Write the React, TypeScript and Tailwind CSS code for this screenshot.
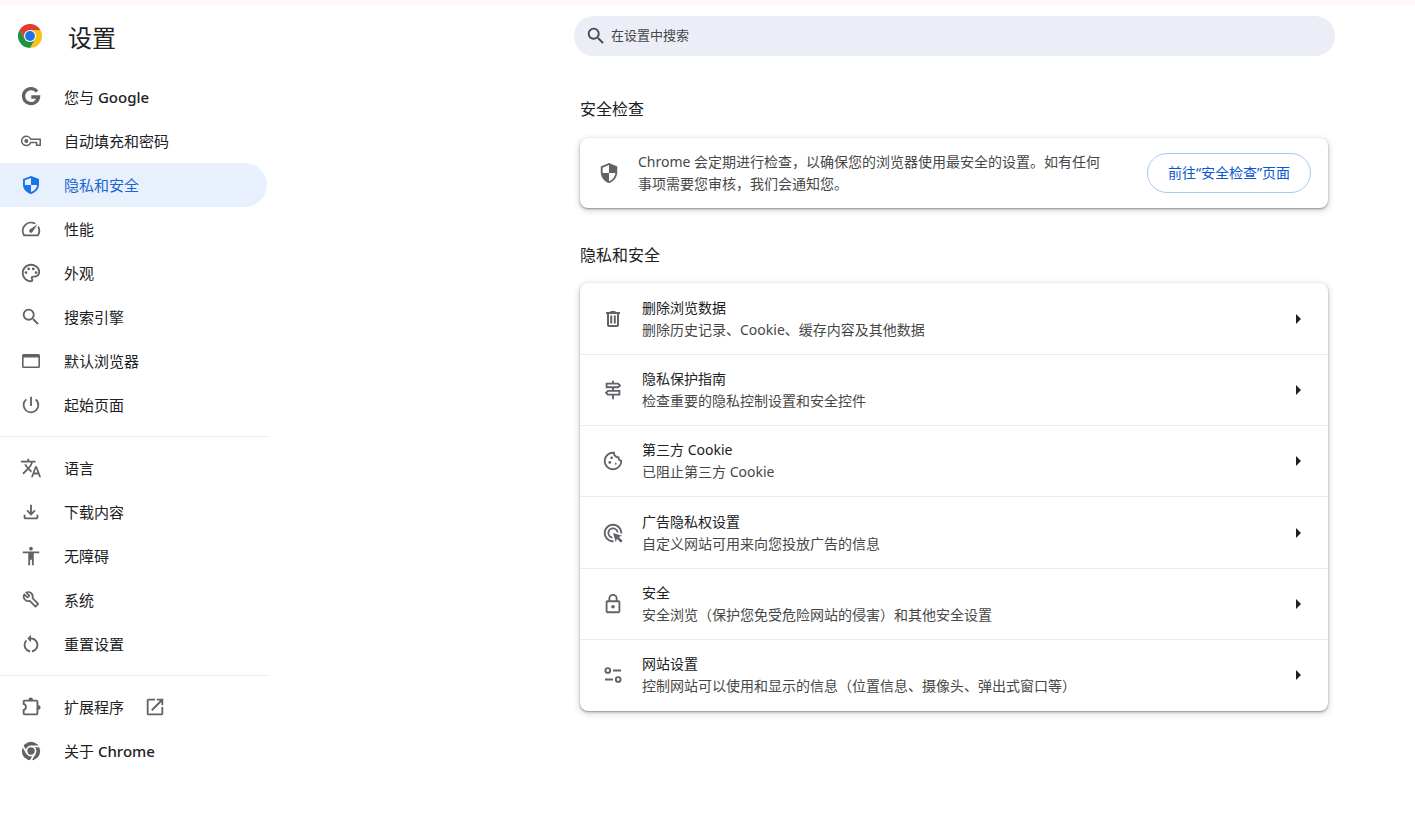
import type { ReactNode } from "react";
import {
  MdAccessibility,
  MdAdsClick,
  MdOpenInNew,
  MdOutlineCookie,
  MdOutlinePalette,
  MdOutlineSignpost,
  MdOutlineSpeed,
  MdPowerSettingsNew,
  MdRestartAlt,
  MdSearch,
  MdSecurity,
  MdTranslate,
} from "react-icons/md";

function ChromeLogo() {
  return (
    <svg viewBox="0 0 48 48" className="size-6" aria-hidden="true">
      <path fill="#e33b2e" d="M3.2 12 13.6 30 24 24V12h20.800A24 24 0 0 0 3.2 12z" />
      <path fill="#fbc116" d="M24 12h20.800A24 24 0 0 1 24 48l10.400-18L24 24z" />
      <path fill="#229342" d="M3.200 12 13.600 30 24 36l10.400-6L24 48A24 24 0 0 1 3.200 12z" />
      <circle cx="24" cy="24" r="12" fill="#fff" />
      <circle cx="24" cy="24" r="9.800" fill="#1a73e8" />
    </svg>
  );
}

function GoogleIcon() {
  return (
    <svg viewBox="0 0 24 24" fill="none" stroke="currentColor" strokeWidth="3.6">
      <path d="M18.6 6.1A8.2 8.2 0 1 0 20.2 12H12.3" />
    </svg>
  );
}

function KeyIcon() {
  return (
    <svg viewBox="0 0 22 22" fill="none" stroke="currentColor" strokeWidth="1.500">
      <path d="M10.700 9.200H20.200V15.200H16.600V12.600H10.700A4.700 4.700 0 1 1 10.700 9.200z" />
      <circle cx="6.300" cy="11" r="2" fill="currentColor" stroke="none" />
    </svg>
  );
}

function ShieldIcon() {
  return (
    <svg viewBox="0 0 22 22" fill="currentColor">
      <path
        fillRule="evenodd"
        d="M11 2 3 5v5.500c0 4.500 3.300 8.200 8 9.500 4.700-1.300 8-5 8-9.500V5zM11 4v7H4.900V6.300zM11 11h6.100c-.3 3.300-2.800 6-6.100 7z"
      />
    </svg>
  );
}

function BrowserIcon() {
  return (
    <svg viewBox="0 0 22 22" fill="currentColor">
      <path d="M3.500 4h15A1.500 1.500 0 0 1 20 5.500v11a1.500 1.500 0 0 1-1.500 1.500h-15A1.500 1.500 0 0 1 2 16.500v-11A1.500 1.500 0 0 1 3.500 4zm.1 3.500v8.900h14.800V7.500z" />
    </svg>
  );
}

function DownloadIcon() {
  return (
    <svg viewBox="0 0 24 24" fill="currentColor">
      <path d="M12 16 7 11l1.4-1.45 2.6 2.6V4h2v8.15l2.6-2.6L17 11zM6 20c-1.1 0-2-.9-2-2v-3h2v3h12v-3h2v3c0 1.1-.9 2-2 2z" />
    </svg>
  );
}

function WrenchIcon() {
  return (
    <svg viewBox="0 0 22 22" fill="none" stroke="currentColor" strokeWidth="1.700" strokeLinejoin="round">
      <path d="m4.300 5.300 3.200 3.200 1.900-1.900-3.200-3.100a4.600 4.600 0 0 1 6.300 5.700l5.700 5.700-2.700 2.700-5.700-5.700a4.600 4.600 0 0 1-5.500-6.600z" />
    </svg>
  );
}

function ExtensionIcon() {
  return (
    <svg viewBox="0 0 24 24" fill="currentColor">
      <path d="M3 19v-4.6c1.5-.2 2.5-1.1 2.5-2.4S4.500 9.800 3 9.600V6c0-1.100.9-2 2-2h4.200a2.500 2.500 0 0 1 5 0H18c1.100 0 2 .9 2 2v4a2.500 2.500 0 0 1 0 5v4c0 1.100-.9 2-2 2H5c-1.100 0-2-.9-2-2zm2 0h13V6H5v2c1.500.800 2.500 2.200 2.500 4S6.500 15.200 5 16z" />
    </svg>
  );
}

function ChromeMonoIcon() {
  return (
    <svg viewBox="0 0 24 24">
      <circle cx="12" cy="12" r="10" fill="currentColor" />
      <circle cx="12" cy="12" r="5" fill="none" stroke="#fff" strokeWidth="1.900" />
      <path d="M12 7h10M7.670 14.500 2.670 5.840M16.330 14.500 11.330 23.160" stroke="#fff" strokeWidth="1.900" />
    </svg>
  );
}

function TrashIcon() {
  return (
    <svg viewBox="0 0 22 22" fill="currentColor">
      <path d="M8.500 3h5v1H18v2h-1v11a2 2 0 0 1-2 2H7a2 2 0 0 1-2-2V6H4V4h4.500zM7 6v11h8V6zm1.200 1.500h2v8h-2zm3.600 0h2v8h-2z" />
    </svg>
  );
}

function LockIcon() {
  return (
    <svg viewBox="0 0 24 24" fill="currentColor">
      <path d="M18 8h-1V6A5 5 0 0 0 7 6v2H6c-1.100 0-2 .9-2 2v10c0 1.100.9 2 2 2h12c1.100 0 2-.9 2-2V10c0-1.100-.9-2-2-2zM9 6a3 3 0 0 1 6 0v2H9zm9 14H6V10h12z" />
      <circle cx="12" cy="15" r="2" />
    </svg>
  );
}

function TuneIcon() {
  return (
    <svg viewBox="0 0 22 22" fill="none" stroke="currentColor" strokeWidth="1.900">
      <circle cx="5.800" cy="6.500" r="2.400" />
      <path d="M11 6.500h8M3 15.500h8" />
      <circle cx="16.200" cy="15.500" r="2.400" />
    </svg>
  );
}

type MenuItem = {
  label: string;
  brand?: string;
  icon: ReactNode;
  active?: boolean;
  external?: boolean;
};

const menuGroups: MenuItem[][] = [
  [
    { label: "您与 ", brand: "Google", icon: <GoogleIcon /> },
    { label: "自动填充和密码", icon: <KeyIcon /> },
    { label: "隐私和安全", icon: <ShieldIcon />, active: true },
    { label: "性能", icon: <MdOutlineSpeed /> },
    { label: "外观", icon: <MdOutlinePalette /> },
    { label: "搜索引擎", icon: <MdSearch /> },
    { label: "默认浏览器", icon: <BrowserIcon /> },
    { label: "起始页面", icon: <MdPowerSettingsNew /> },
  ],
  [
    { label: "语言", icon: <MdTranslate /> },
    { label: "下载内容", icon: <DownloadIcon /> },
    { label: "无障碍", icon: <MdAccessibility /> },
    { label: "系统", icon: <WrenchIcon /> },
    { label: "重置设置", icon: <MdRestartAlt /> },
  ],
  [
    { label: "扩展程序", icon: <ExtensionIcon />, external: true },
    { label: "关于 ", brand: "Chrome", icon: <ChromeMonoIcon /> },
  ],
];

const privacyRows = [
  { title: "删除浏览数据", desc: "删除历史记录、Cookie、缓存内容及其他数据", icon: <TrashIcon /> },
  { title: "隐私保护指南", desc: "检查重要的隐私控制设置和安全控件", icon: <MdOutlineSignpost /> },
  { title: "第三方 Cookie", desc: "已阻止第三方 Cookie", icon: <MdOutlineCookie /> },
  { title: "广告隐私权设置", desc: "自定义网站可用来向您投放广告的信息", icon: <MdAdsClick /> },
  { title: "安全", desc: "安全浏览（保护您免受危险网站的侵害）和其他安全设置", icon: <LockIcon /> },
  { title: "网站设置", desc: "控制网站可以使用和显示的信息（位置信息、摄像头、弹出式窗口等）", icon: <TuneIcon /> },
];

const cardClass =
  "rounded-lg bg-white shadow-[0_1px_2px_0_rgba(60,64,67,0.5),0_2px_6px_1px_rgba(60,64,67,0.2)]";

function Sidebar() {
  return (
    <aside className="w-[269px] shrink-0">
      <div className="flex h-[70px] items-center gap-[26px] pb-2 pl-[18px]">
        <ChromeLogo />
        <h1 className="pt-[3px] text-2xl">设置</h1>
      </div>
      <nav aria-label="设置">
        {menuGroups.map((group, index) => (
          <ul key={index} className={index > 0 ? "mt-[9px] border-t border-[#e8eaed] pt-[9px]" : ""}>
            {group.map((item) => (
              <li key={item.label}>
                <a
                  href="#"
                  aria-current={item.active ? "page" : undefined}
                  className={`mr-0.5 flex h-11 items-center rounded-r-full pl-5 text-[15px] ${
                    item.active ? "bg-[#e8f0fe] text-[#1967d2]" : "text-[#202124]"
                  }`}
                >
                  <span
                    className={`mr-[22px] [&>svg]:size-[22px] ${
                      item.active ? "text-[#1a73e8]" : "text-[#5f6368]"
                    }`}
                  >
                    {item.icon}
                  </span>
                  <span>
                    {item.label}
                    {item.brand && <span className="font-medium">{item.brand}</span>}
                  </span>
                  {item.external && <MdOpenInNew className="ml-5 size-[22px] text-[#5f6368]" />}
                </a>
              </li>
            ))}
          </ul>
        ))}
      </nav>
    </aside>
  );
}

export default function App() {
  return (
    <div className="min-h-screen border-t-[5px] border-[#fff8f6] bg-white font-['Noto_Sans','Noto_Sans_CJK_SC',sans-serif] text-[#202124]">
      <div className="flex">
        <Sidebar />

        <main className="mr-20 ml-auto w-full max-w-[761px] pt-[11px]">
          <label className="flex h-10 items-center gap-1 rounded-full bg-[#ebeef7] pl-[11px]">
            <MdSearch className="size-[22px] text-[#474747]" />
            <input
              type="search"
              aria-label="在设置中搜索"
              placeholder="在设置中搜索"
              className="min-w-0 flex-1 bg-transparent pr-5 text-[13px] outline-none placeholder:text-[#474747]"
            />
          </label>

          <div className="mr-[7px] ml-1.5">
            <section className="pt-[41px]">
              <h2 className="text-base leading-6">安全检查</h2>
              <div className={`mt-[17px] flex min-h-[70px] items-center pr-[17px] pl-[18px] ${cardClass}`}>
                <MdSecurity className="size-[22px] shrink-0 text-[#5f6368]" />
                <p className="ml-[18px] flex-1 text-sm leading-[22px] text-[#474747]">
                  Chrome 会定期进行检查，以确保您的浏览器使用最安全的设置。如有任何事项需要您审核，我们会通知您。
                </p>
                <button className="ml-10 h-10 shrink-0 rounded-full border border-[#a8c7fa] px-5 text-sm text-[#0b57d0]">
                  前往“安全检查”页面
                </button>
              </div>
            </section>

            <section className="pt-[35px]">
              <h2 className="text-base leading-6">隐私和安全</h2>
              <ul className={`mt-4 grid min-h-[428px] auto-rows-fr pb-px ${cardClass}`}>
                {privacyRows.map((row) => (
                  <li key={row.title} className="border-t border-[#e8eaed] first:border-t-0">
                    <button className="flex h-full w-full items-center pr-[19px] pl-[22px] text-left">
                      <span className="mr-[18px] text-[#5f6368] [&>svg]:size-[22px]">{row.icon}</span>
                      <span className="flex-1 text-sm leading-[22px]">
                        <span className="block">{row.title}</span>
                        <span className="block text-[#474747]">{row.desc}</span>
                      </span>
                      <svg viewBox="0 0 22 22" fill="currentColor" className="size-[22px]">
                        <path d="m9 6 5 5-5 5z" />
                      </svg>
                    </button>
                  </li>
                ))}
              </ul>
            </section>
          </div>
        </main>
      </div>
    </div>
  );
}
